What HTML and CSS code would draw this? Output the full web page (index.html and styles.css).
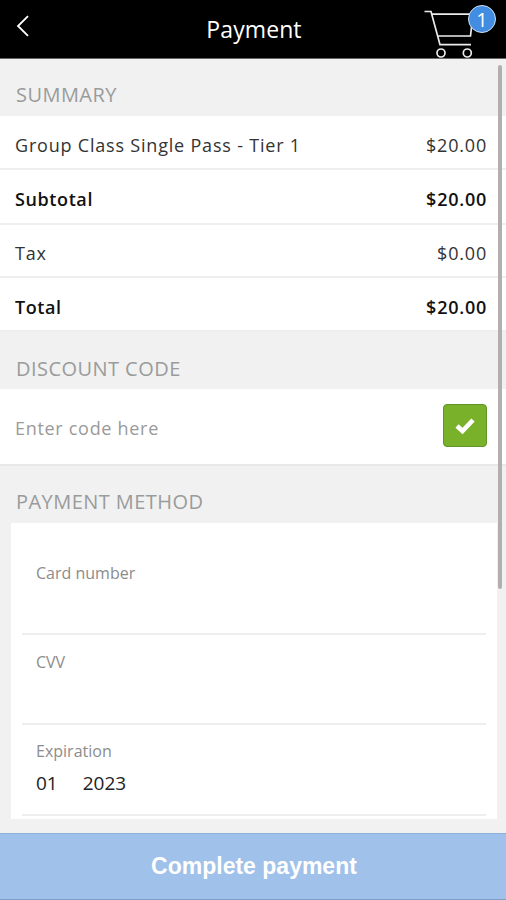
FILE: index.html
```html
<!DOCTYPE html>
<html lang="en">
<head>
<meta charset="utf-8">
<title>Payment</title>
<link rel="stylesheet" href="styles.css">
</head>
<body>
<div class="screen">
  <header class="topbar">
    <button class="back" aria-label="Back">
      <svg width="14" height="22" viewBox="0 0 14 22"><path d="M12 1.2 2 11l10 9.8" fill="none" stroke="#fff" stroke-width="1.8"/></svg>
    </button>
    <h1 class="title">Payment</h1>
    <div class="cart">
      <svg width="54" height="50" viewBox="0 0 54 50" fill="none" stroke="#ececec" stroke-width="1.7">
        <path d="M.5 2.500H7L16 35.700H47M8 5.200H49L46.500 27H13.500"/>
        <circle cx="17" cy="44" r="4"/>
        <circle cx="43.300" cy="44" r="4"/>
      </svg>
      <span class="badge">1</span>
    </div>
  </header>
  <main class="content">
    <h2 class="section">SUMMARY</h2>
    <div class="row"><span class="item">Group Class Single Pass - Tier 1</span><span class="price">$20.00</span></div>
    <div class="row row-tall strong"><span>Subtotal</span><span class="price">$20.00</span></div>
    <div class="row row-short"><span>Tax</span><span class="price">$0.00</span></div>
    <div class="row strong"><span>Total</span><span class="price">$20.00</span></div>
    <h2 class="section">DISCOUNT CODE</h2>
    <div class="discount">
      <span class="placeholder">Enter code here</span>
      <button class="apply" aria-label="Apply">
        <svg width="20" height="18" viewBox="0 0 20 18"><path d="M2 9 7.500 14 18 3" fill="none" stroke="#fff" stroke-width="4.600"/></svg>
      </button>
    </div>
    <h2 class="section">PAYMENT METHOD</h2>
    <div class="card">
      <div class="field field-first"><span class="label">Card number</span></div>
      <div class="field"><span class="label">CVV</span></div>
      <div class="field field-last"><span class="label">Expiration</span><div class="date"><span>01</span><span>2023</span></div></div>
    </div>
    <div class="scrollbar"></div>
  </main>
  <button class="complete">Complete payment</button>
</div>
</body>
</html>
```

FILE: styles.css
```css
* { box-sizing: border-box; }
body { margin: 0; background: #f1f1f1; font-family: "Open Sans", sans-serif; color: #222; }
button { border: 0; padding: 0; background: none; font: inherit; }
svg { display: block; }
.screen { width: 506px; height: 900px; display: flex; flex-direction: column; overflow: hidden; }
.topbar { height: 59px; flex: none; display: grid; grid-template-columns: 82px 1fr 82px; background: #000; border-bottom: 1px solid #666; }
.back { align-self: start; padding: 15px 0 0 16px; }
.title { margin: 0; padding-left: 2px; text-align: center; color: #fff; font-size: 23px; line-height: 58px; font-weight: 400; letter-spacing: 0.1px; }
.cart { position: relative; padding-top: 9px; }
.badge { position: absolute; left: 44px; top: 5px; width: 28px; height: 28px; border: 1px solid #cfe0f5; border-radius: 50%; background: #428de2; color: #fff; font-size: 20px; line-height: 27px; text-align: center; }
.content { position: relative; flex: 1; }
.section { margin: 0; height: 57px; padding: 15px 16px 0; font-size: 20px; line-height: 42px; font-weight: 400; letter-spacing: 0.45px; color: #999c9b; }
.row { height: 54px; padding: 5px 18px 0 15px; display: flex; align-items: center; justify-content: space-between; background: #fff; border-bottom: 2px solid #eee; font-size: 18px; letter-spacing: 0.8px; color: #333; }
.row-tall { height: 55px; }
.row-short { height: 53px; }
.strong { font-weight: 600; letter-spacing: 0.6px; color: #111; }
.price { margin-right: 1px; }
.strong .price { letter-spacing: 0.75px; }
.discount { height: 77px; padding: 0 19px 0 15px; display: flex; align-items: center; justify-content: space-between; background: #fff; border-bottom: 2px solid #e8e8e8; }
.row + .section { padding-top: 16px; }
.placeholder { padding-top: 2px; font-size: 18px; letter-spacing: 0.7px; color: #9a9a9a; }
.apply { width: 44px; height: 43px; display: grid; place-items: center; margin-bottom: 2px; border: 1px solid #5e9428; border-radius: 4px; background: #79b22a; }
.card { margin: 0 9px 0 11px; height: 296px; padding: 0 11px; background: #fff; }
.field { height: 90px; padding: 15px 14px 0; border-bottom: 2px solid #eee; }
.field-first { height: 112px; padding-top: 38px; }
.field-last { height: 91px; padding-top: 14px; }
.label { display: block; font-size: 16px; line-height: 24px; color: #8c8c8c; }
.date { display: flex; gap: 25px; font-size: 19px; line-height: 24px; padding-top: 8px; color: #222; }
.scrollbar { position: absolute; right: 4px; top: 6px; width: 4px; height: 524px; border-radius: 2px; background: #b0b0b0; }
.complete { height: 67px; flex: none; background: #a0c1e9; border-top: 1px solid #8eb1dc; border-bottom: 1px solid #7f9fc8; color: #fff; padding: 0 0 2px 2px; font: bold 23px/62px "Liberation Sans", sans-serif; }
```
